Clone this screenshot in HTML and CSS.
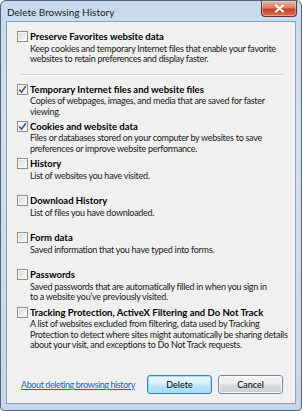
FILE: index.html
```
<!DOCTYPE html>
<html>
<head>
<meta charset="utf-8">
<link rel="stylesheet" href="styles.css">
</head>
<body>
<div class="window">
  <div class="titlebar">
    <span class="title">Delete Browsing History</span>
    <div class="close"><svg width="11" height="9" viewBox="0 0 11 9"><path d="M2 1.5 L9 7.5 M9 1.5 L2 7.5" stroke="#fff" stroke-width="2.2" stroke-linecap="round"/></svg></div>
  </div>
  <div class="panel">
    <div class="item first">
      <div class="head"><span class="cb"></span><span class="label">Preserve Favorites website data</span></div>
      <div class="desc">Keep cookies and temporary Internet files that enable your favorite<br>websites to retain preferences and display faster.</div>
    </div>
    <div class="sep"></div>
    <div class="item">
      <div class="head"><span class="cb checked"><svg width="9" height="9" viewBox="0 0 9 9"><path d="M1.3 4.6 L3.5 7.3 L7.8 1.3" fill="none" stroke="#3f56a0" stroke-width="1.6"/></svg></span><span class="label">Temporary Internet files and website files</span></div>
      <div class="desc">Copies of webpages, images, and media that are saved for faster<br>viewing.</div>
    </div>
    <div class="item">
      <div class="head"><span class="cb checked"><svg width="9" height="9" viewBox="0 0 9 9"><path d="M1.3 4.6 L3.5 7.3 L7.8 1.3" fill="none" stroke="#3f56a0" stroke-width="1.6"/></svg></span><span class="label">Cookies and website data</span></div>
      <div class="desc">Files or databases stored on your computer by websites to save<br>preferences or improve website performance.</div>
    </div>
    <div class="item tall">
      <div class="head"><span class="cb"></span><span class="label">History</span></div>
      <div class="desc">List of websites you have visited.</div>
    </div>
    <div class="item tall">
      <div class="head"><span class="cb"></span><span class="label">Download History</span></div>
      <div class="desc">List of files you have downloaded.</div>
    </div>
    <div class="item tall">
      <div class="head"><span class="cb"></span><span class="label">Form data</span></div>
      <div class="desc">Saved information that you have typed into forms.</div>
    </div>
    <div class="item">
      <div class="head"><span class="cb"></span><span class="label">Passwords</span></div>
      <div class="desc">Saved passwords that are automatically filled in when you sign in<br>to a website you’ve previously visited.</div>
    </div>
    <div class="item">
      <div class="head"><span class="cb"></span><span class="label">Tracking Protection, ActiveX Filtering and Do Not Track</span></div>
      <div class="desc">A list of websites excluded from filtering, data used by Tracking<br>Protection to detect where sites might automatically be sharing details<br>about your visit, and exceptions to Do Not Track requests.</div>
    </div>
    <div class="footer">
      <a class="link" href="#">About deleting browsing history</a>
      <div class="buttons">
        <button class="btn default">Delete</button>
        <button class="btn">Cancel</button>
      </div>
    </div>
  </div>
</div>
</body>
</html>
```
FILE: styles.css
```
* { box-sizing: border-box; }
html, body { margin: 0; padding: 0; background: #fff; }
body {
  width: 302px;
  height: 411px;
  overflow: hidden;
  font-family: Lato, "Open Sans", sans-serif;
  font-size: 9px;
  color: #000;
}
.window {
  width: 302px;
  height: 411px;
  border: 1px solid #54657a;
  border-radius: 6px 6px 4px 4px;
  background: linear-gradient(180deg, #c6d9ee 0%, #d3e2f3 30%, #c9dbef 70%, #c3d6ec 100%);
  display: flex;
  flex-direction: column;
  padding: 0 5px 6px 5px;
}
.titlebar {
  height: 20px;
  flex: none;
  display: flex;
  align-items: center;
  justify-content: space-between;
}
.title {
  font-size: 10px;
  color: #1e1e1e;
  padding-left: 1px;
  margin-top: 2px;
}
.close {
  width: 36px;
  height: 16px;
  align-self: flex-start;
  margin-top: 0;
  margin-right: -1px;
  border: 1px solid #6e3128;
  border-top: none;
  border-radius: 0 0 4px 4px;
  background: linear-gradient(180deg, #eab0a2 0%, #d77e69 45%, #c4412a 55%, #d86e52 100%);
  display: flex;
  align-items: center;
  justify-content: center;
  box-shadow: inset 0 0 0 1px rgba(255,255,255,0.35);
}
.panel {
  flex: 1;
  border: 1px solid #8aa0bb;
  background: #f0f0f0;
  padding: 9px 0 0 10px;
  display: flex;
  flex-direction: column;
}
.item { padding-bottom: 3.5px; }
.item.tall { padding-bottom: 14px; }
.item.first { padding-bottom: 0; }
.head {
  display: flex;
  align-items: center;
  height: 11px;
}
.cb {
  width: 11px;
  height: 11px;
  flex: none;
  border: 1px solid #8e8f8f;
  background: linear-gradient(135deg, #d4d5d6 0%, #ebebeb 55%, #fafafa 100%);
  box-shadow: inset 0 0 0 1px #f6f6f6;
  margin-right: 2px;
  display: flex;
  align-items: center;
  justify-content: center;
}
.cb.checked { background: linear-gradient(135deg, #e6e6e6, #fbfbfb); }
.label {
  font-weight: bold;
  font-size: 9.5px;
  white-space: nowrap;
}
.desc {
  padding-left: 13px;
  line-height: 10.6px;
  margin-top: 1.5px;
  color: #1a1a1a;
  white-space: nowrap;
  letter-spacing: -0.27px;
}
.sep {
  height: 1px;
  background: #d2d2d2;
  box-shadow: 0 1px 0 #fafafa;
  margin: 9px 12px 9px 4px;
}
.footer {
  margin-top: auto;
  display: flex;
  align-items: center;
  justify-content: space-between;
  padding: 0 12px 9px 4px;
}
.link {
  color: #1a62c5;
  text-decoration: underline;
  font-size: 9px;
  white-space: nowrap;
  letter-spacing: -0.4px;
}
.buttons { display: flex; gap: 6px; }
.btn {
  width: 65px;
  height: 19px;
  font-family: inherit;
  font-size: 9px;
  color: #000;
  border: 1px solid #6d8fae;
  border-radius: 3px;
  background: linear-gradient(180deg, #f6f6f6 0%, #ebebeb 48%, #dddddd 52%, #cfcfcf 100%);
  box-shadow: inset 0 0 0 1px rgba(255,255,255,0.8);
  padding: 0;
}
.btn.default {
  border-color: #3c7fb1;
  background: linear-gradient(180deg, #eaf6fd 0%, #d9f0fc 48%, #bee6fd 52%, #a7d9f5 100%);
  box-shadow: inset 0 0 0 1px #9fdcf8;
}
```
